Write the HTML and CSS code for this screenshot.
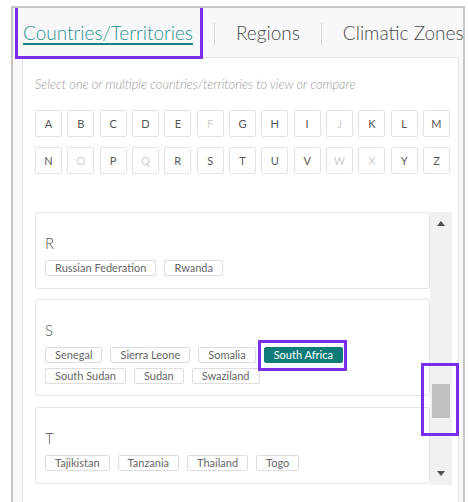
FILE: index.html
```html
<!DOCTYPE html>
<html lang="en">
<head>
<meta charset="utf-8">
<title>Country selector</title>
<link rel="stylesheet" href="styles.css">
</head>
<body>
<div class="frame">
  <nav class="tabs">
    <a class="tab active">Countries/Territories</a>
    <span class="sep"></span>
    <a class="tab">Regions</a>
    <span class="sep"></span>
    <a class="tab">Climatic Zones</a>
  </nav>
  <section class="panel">
    <p class="hint">Select one or multiple countries/territories to view or compare</p>
    <div class="letters">
      <button class="letter">A</button><button class="letter">B</button><button class="letter">C</button><button class="letter">D</button><button class="letter">E</button><button class="letter off">F</button><button class="letter">G</button><button class="letter">H</button><button class="letter">I</button><button class="letter off">J</button><button class="letter">K</button><button class="letter">L</button><button class="letter">M</button>
      <button class="letter">N</button><button class="letter off">O</button><button class="letter">P</button><button class="letter off">Q</button><button class="letter">R</button><button class="letter">S</button><button class="letter">T</button><button class="letter">U</button><button class="letter">V</button><button class="letter off">W</button><button class="letter off">X</button><button class="letter">Y</button><button class="letter">Z</button>
    </div>
    <div class="list-wrap">
      <div class="list">
        <div class="group g-r">
          <div class="group-letter">R</div>
          <div class="tags">
            <span class="tag">Russian Federation</span>
            <span class="tag">Rwanda</span>
          </div>
        </div>
        <div class="group g-s">
          <div class="group-letter">S</div>
          <div class="tags">
            <span class="tag">Senegal</span>
            <span class="tag">Sierra Leone</span>
            <span class="tag">Somalia</span>
            <span class="tag selected">South Africa</span>
            <span class="tag">South Sudan</span>
            <span class="tag">Sudan</span>
            <span class="tag">Swaziland</span>
          </div>
        </div>
        <div class="group g-t">
          <div class="group-letter">T</div>
          <div class="tags">
            <span class="tag">Tajikistan</span>
            <span class="tag">Tanzania</span>
            <span class="tag">Thailand</span>
            <span class="tag">Togo</span>
          </div>
        </div>
      </div>
      <div class="scrollbar">
        <span class="arrow up"></span>
        <div class="track"><div class="thumb"></div></div>
        <span class="arrow down"></span>
      </div>
    </div>
  </section>
</div>
</body>
</html>
```

FILE: styles.css
```css
* { box-sizing: border-box; }

body {
  margin: 0;
  background: #ffffff;
  font-family: Lato, "Open Sans", sans-serif;
  color: #555;
  overflow: hidden;
}

.frame {
  margin: 6px 0 0 11px;
  width: 454px;
  height: 520px;
  border: 2px solid #c6c6c6;
  border-bottom: none;
  background: #f8f8fa;
  padding: 0 4px 0 9px;
  overflow: hidden;
}

/* tab strip */
.tabs {
  display: flex;
  align-items: center;
  height: 49px;
  white-space: nowrap;
}

.tab {
  position: relative;
  flex: none;
  font-size: 19px;
  font-weight: 300;
  color: #4a4a4a;
  line-height: 24px;
  padding-top: 1px;
}

.tab.active {
  color: #2a9292;
  text-decoration: underline;
  text-decoration-color: #17827f;
  text-decoration-thickness: 1.5px;
  text-underline-offset: 3px;
  margin-left: 1px;
}

.tab.active::after {
  content: "";
  position: absolute;
  left: -8px;
  top: -15px;
  right: -10px;
  bottom: -14px;
  border: 3px solid #7a2ef2;
}

.sep {
  flex: none;
  width: 1px;
  height: 22px;
  background: #d6d6d6;
  margin: 2px 21px 0 21px;
}

/* white content panel */
.panel {
  background: #fff;
  border: 1px solid #e4e4e4;
  border-bottom: none;
  height: 470px;
  padding: 17px 6px 0 12px;
}

.hint {
  margin: 0;
  font-size: 12.8px;
  line-height: 18px;
  font-style: italic;
  font-weight: 300;
  color: #999;
}

.letters {
  display: grid;
  grid-template-columns: repeat(13, 27px);
  grid-auto-rows: 27px;
  column-gap: 5.33px;
  row-gap: 10px;
  margin-top: 17px;
}

.letter {
  font: 11px Lato, "Open Sans", sans-serif;
  color: #555;
  background: #fff;
  border: 1px solid #e2e2e2;
  border-radius: 2px;
  padding: 0;
}

.letter.off { color: #cfcfcf; }

/* scrolling list of letter groups */
.list-wrap {
  display: flex;
  margin-top: 38px;
  height: 273px;
}

.list {
  width: 395px;
  overflow: hidden;
  display: flex;
  flex-direction: column;
}

.group {
  flex: none;
  background: #fff;
  border: 1px solid #e3e3e3;
  border-radius: 3px;
  padding: 0 9px;
}

.g-r { height: 77px; padding-top: 21px; }
.g-s { height: 97px; margin-top: 10px; padding-top: 21px; }
.g-t { height: 77px; margin-top: 11px; padding-top: 21px; }

.group-letter {
  font-size: 15px;
  font-weight: 300;
  line-height: 18px;
  color: #555;
}

.tags {
  display: flex;
  flex-wrap: wrap;
  gap: 5px 8px;
  margin-top: 8px;
}

.tag {
  font-size: 11px;
  line-height: 14px;
  color: #666;
  border: 1px solid #dedede;
  border-radius: 2px;
  padding: 0 9px;
  height: 16px;
}

.tag.selected {
  position: relative;
  background: #0d7c79;
  border-color: #0d7c79;
  color: #fff;
}

.tag.selected::after {
  content: "";
  position: absolute;
  left: -7px;
  top: -8px;
  right: -5px;
  bottom: -9px;
  border: 3px solid #7a2ef2;
}

/* drawn scrollbar */
.scrollbar {
  width: 22px;
  background: #f1f1f1;
  display: flex;
  flex-direction: column;
  align-items: center;
}

.arrow {
  flex: none;
  width: 0;
  height: 0;
  border-left: 4px solid transparent;
  border-right: 4px solid transparent;
}

.arrow.up { border-bottom: 5px solid #505050; margin-top: 9px; }
.arrow.down { border-top: 5px solid #505050; margin-bottom: 9px; }

.track {
  flex: 1;
  width: 100%;
  position: relative;
}

.thumb {
  position: absolute;
  left: 2px;
  right: 2px;
  top: 158px;
  height: 34px;
  background: #c1c1c1;
}

.thumb::after {
  content: "";
  position: absolute;
  left: -11px;
  right: -9px;
  top: -21px;
  bottom: -18px;
  border: 3px solid #7a2ef2;
}
```
